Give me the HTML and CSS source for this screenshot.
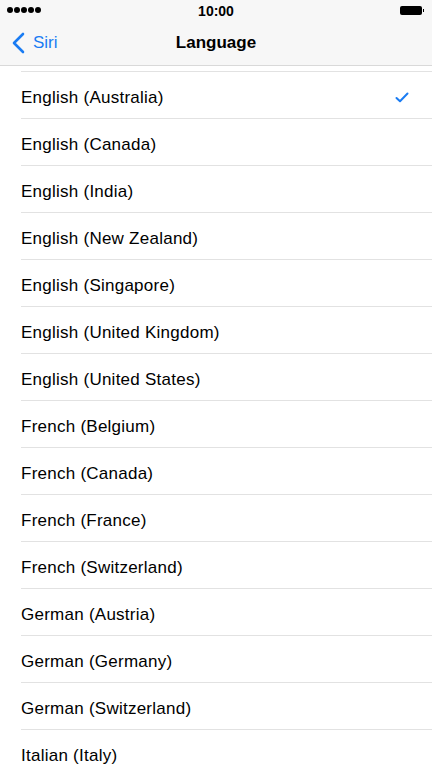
FILE: index.html
```html
<!DOCTYPE html>
<html lang="en">
<head>
<meta charset="utf-8">
<title>Language</title>
<link rel="stylesheet" href="styles.css">
</head>
<body>
<div class="screen">
  <header class="bars">
    <div class="status">
      <div class="signal">
        <span class="dot"></span><span class="dot"></span><span class="dot"></span><span class="dot"></span><span class="dot"></span>
      </div>
      <div class="clock">10:00</div>
      <div class="battery"><span class="cell"></span><span class="tip"></span></div>
    </div>
    <nav class="navbar">
      <a class="back">
        <svg class="chev" width="13" height="22" viewBox="0 0 13 22"><path d="M11 2 L2 11 L11 20" fill="none" stroke="#1a7cf3" stroke-width="2.6" stroke-linecap="round" stroke-linejoin="round"/></svg>
        <span>Siri</span>
      </a>
      <h1 class="title">Language</h1>
    </nav>
  </header>
  <ul class="list">
    <li class="row">English (Australia)
      <svg class="check" width="14" height="11" viewBox="0 0 14 11"><path d="M1.5 6 L5 9.3 L12.5 1.5" fill="none" stroke="#1a7cf3" stroke-width="2" stroke-linecap="round" stroke-linejoin="round"/></svg>
    </li>
    <li class="row">English (Canada)</li>
    <li class="row">English (India)</li>
    <li class="row">English (New Zealand)</li>
    <li class="row">English (Singapore)</li>
    <li class="row">English (United Kingdom)</li>
    <li class="row">English (United States)</li>
    <li class="row">French (Belgium)</li>
    <li class="row">French (Canada)</li>
    <li class="row">French (France)</li>
    <li class="row">French (Switzerland)</li>
    <li class="row">German (Austria)</li>
    <li class="row">German (Germany)</li>
    <li class="row">German (Switzerland)</li>
    <li class="row">Italian (Italy)</li>
  </ul>
</div>
</body>
</html>
```
FILE: styles.css
```css
html, body {
  margin: 0;
  padding: 0;
  background: #ffffff;
}

.screen {
  width: 432px;
  height: 768px;
  overflow: hidden;
  font-family: "Liberation Sans", Arial, sans-serif;
  color: #000;
}

.bars {
  background: #f7f7f7;
  border-bottom: 1px solid #d9d9d9;
}

.status {
  height: 20px;
  display: flex;
  align-items: center;
  justify-content: space-between;
  padding: 0 8px 0 7px;
  position: relative;
}

.signal {
  display: flex;
  gap: 1px;
}

.dot {
  width: 6px;
  height: 6px;
  border-radius: 50%;
  background: #000;
}

.clock {
  position: absolute;
  left: 0;
  right: 0;
  text-align: center;
  font-size: 14px;
  font-weight: bold;
  top: 3px;
}

.battery {
  display: flex;
  align-items: center;
}

.cell {
  width: 22px;
  height: 9px;
  background: #000;
  border-radius: 2px;
}

.tip {
  width: 1.5px;
  height: 3px;
  background: #000;
  margin-left: 1px;
}

.navbar {
  height: 45px;
  display: flex;
  align-items: center;
  position: relative;
}

.back {
  display: flex;
  align-items: center;
  gap: 8px;
  margin-left: 12px;
  color: #1a7cf3;
  font-size: 17px;
}

.chev {
  display: block;
}

.title {
  position: absolute;
  left: 0;
  right: 0;
  margin: 0;
  text-align: center;
  font-size: 17px;
  font-weight: bold;
}

.list {
  list-style: none;
  margin: 5px 0 0 21px;
  padding: 0;
}

.row {
  height: 41px;
  padding-top: 5px;
  border-top: 1px solid #e2e2e2;
  display: flex;
  align-items: center;
  justify-content: space-between;
  font-size: 17px;
  letter-spacing: 0.25px;
  padding-right: 23px;
}

.check {
  display: block;
}
```
